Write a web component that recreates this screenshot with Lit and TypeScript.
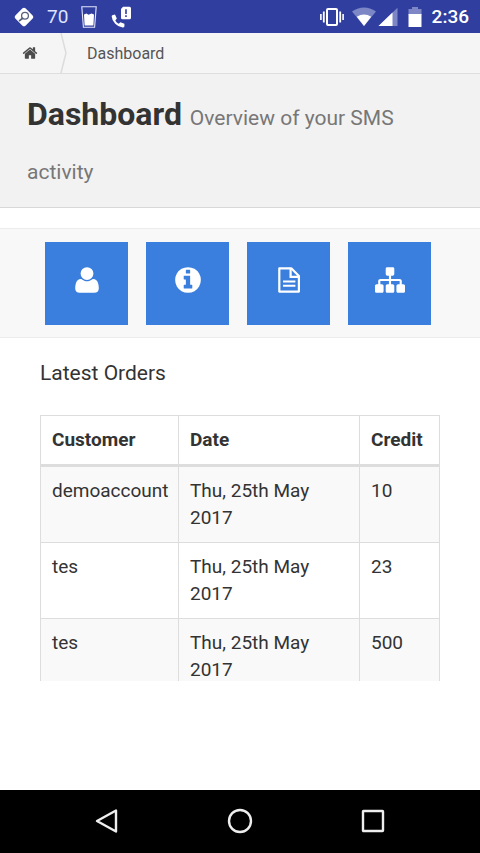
import { LitElement, html, css, svg } from "lit";
import { customElement } from "lit/decorators.js";

const HOME = "M1472 992v480q0 26-19 45t-45 19h-384v-384h-256v384h-384q-26 0-45-19t-19-45v-480q0-1 .5-3t.5-3l575-474 575 474q1 2 1 6zm223-69l-62 74q-8 9-21 11h-3q-13 0-21-7l-692-577-692 577q-12 8-24 7-13-2-21-11l-62-74q-8-10-7-23.5t11-21.5l719-599q32-26 76-26t76 26l244 204v-195q0-14 9-23t23-9h192q14 0 23 9t9 23v408l219 182q10 8 11 21.5t-7 23.5z";
const USER = "M1600 1405q0 120-73 189.5t-194 69.5h-874q-121 0-194-69.5t-73-189.5q0-53 3.5-103.5t14-109 26.5-108.5 43-97.5 62-81 85.5-53.5 111.5-20q9 0 42 21.5t74.5 48 108 48 133.5 21.5 133.5-21.5 108-48 74.5-48 42-21.5q61 0 111.5 20t85.5 53.5 62 81 43 97.5 26.5 108.5 14 109 3.5 103.5zm-320-893q0 159-112.5 271.5t-271.5 112.5-271.5-112.5-112.5-271.5 112.5-271.5 271.5-112.5 271.5 112.5 112.5 271.5z";
const INFO = "M1152 1376v-160q0-14-9-23t-23-9h-96v-512q0-14-9-23t-23-9h-320q-14 0-23 9t-9 23v160q0 14 9 23t23 9h96v320h-96q-14 0-23 9t-9 23v160q0 14 9 23t23 9h448q14 0 23-9t9-23zm-128-896v-160q0-14-9-23t-23-9h-192q-14 0-23 9t-9 23v160q0 14 9 23t23 9h192q14 0 23-9t9-23zm640 416q0 209-103 385.5t-279.5 279.5-385.5 103-385.5-103-279.5-279.5-103-385.5 103-385.5 279.5-279.5 385.5-103 385.5 103 279.5 279.5 103 385.5z";
const SITEMAP = "M1792 1248v320q0 40-28 68t-68 28h-320q-40 0-68-28t-28-68v-320q0-40 28-68t68-28h96v-192h-512v192h96q40 0 68 28t28 68v320q0 40-28 68t-68 28h-320q-40 0-68-28t-28-68v-320q0-40 28-68t68-28h96v-192h-512v192h96q40 0 68 28t28 68v320q0 40-28 68t-68 28h-320q-40 0-68-28t-28-68v-320q0-40 28-68t68-28h96v-192q0-52 38-90t90-38h512v-192h-96q-40 0-68-28t-28-68v-320q0-40 28-68t68-28h320q40 0 68 28t28 68v320q0 40-28 68t-68 28h-96v192h512q52 0 90 38t38 90v192h96q40 0 68 28t28 68z";

const glyph = (d: string) => svg`<path transform="scale(0.0167411)" fill="currentColor" d=${d} />`;

const documentIcon = svg`
  <path fill="none" stroke="currentColor" stroke-width="2.2" stroke-linejoin="round"
    d="M5.3 3.4h12.2l7.4 7.6v15.6H5.3z" />
  <path fill="none" stroke="currentColor" stroke-width="2.2" d="M16.6 3.4v8.4h8.3" />
  <path fill="none" stroke="currentColor" stroke-width="2" d="M9 16.5h12.4M9 20.8h12.4" />`;

const tiles = [
  { label: "Account", icon: glyph(USER) },
  { label: "Information", icon: glyph(INFO) },
  { label: "Documents", icon: documentIcon },
  { label: "Network", icon: glyph(SITEMAP) },
];

const orders = [
  { customer: "demoaccount", date: "Thu, 25th May 2017", credit: 10 },
  { customer: "tes", date: "Thu, 25th May 2017", credit: 23 },
  { customer: "tes", date: "Thu, 25th May 2017", credit: 500 },
];

@customElement("status-bar")
export class StatusBar extends LitElement {
  static styles = css`
    :host {
      display: flex;
      justify-content: space-between;
      align-items: center;
      height: 33px;
      padding: 0 11px 0 14px;
      background: #303f9f;
      color: #fff;
      font-size: 19px;
    }
    .group { display: flex; align-items: center; gap: 13px; }
    .system { gap: 8px; }
    .count { color: #dfe3ff; }
    .clock { font-weight: 500; }
    svg { display: block; }
  `;
  render() {
    return html`
      <div class="group">
        <svg width="20" height="20" viewBox="0 0 20 20" aria-hidden="true">
          <rect x="2.8" y="2.8" width="14.4" height="14.4" rx="2.5" transform="rotate(45 10 10)" fill="#fff" />
          <circle cx="11" cy="8.8" r="3.4" fill="none" stroke="#59617f" stroke-width="1.3" />
          <path d="M8.6 11.2L5.6 13.6" stroke="#59617f" stroke-width="1.8" stroke-linecap="round" />
        </svg>
        <span class="count">70</span>
        <svg width="16" height="22" viewBox="0 0 16 22" aria-hidden="true">
          <path d="M.8.8h14.4L13.6 21.2H2.4z" fill="none" stroke="#e3e6fb" stroke-width="1.1" />
          <path d="M3 8.500l2.500-1 2 1.200 3-1.200 2.500 1-.6 11H3.600z" fill="#fff" />
        </svg>
        <svg width="22" height="22" viewBox="0 0 22 22" aria-hidden="true">
          <path d="M2.300 9.200l2.700-.6 1.800 4-1.500 1.800q1.200 2.200 3.400 3.400l1.700-1.600 4 1.600v2.700q-.3 1-1.800.9-4.500-.5-7.400-3.600Q2 14.800 1.700 10.500q-.1-1 .6-1.300z" fill="#fff" />
          <path d="M13 .7h6.500q1.500 0 1.500 1.500v9.600q0 1.500-1.500 1.500h-7q-1.500 0-1.500-1.500V3z" fill="#fff" />
          <path d="M16 3.300v4.700M16 9.300v1.700" stroke="#303f9f" stroke-width="1.600" />
        </svg>
      </div>
      <div class="group system">
        <svg width="24" height="20" viewBox="0 0 24 20" fill="none" stroke="#fff" aria-hidden="true">
          <rect x="7" y="2" width="10" height="16" rx="1" stroke-width="2" />
          <path d="M3.800 4.500v11M20.200 4.500v11" stroke-width="1.800" />
          <path d="M.9 7v6M23.100 7v6" stroke-width="1.600" />
        </svg>
        <svg width="46" height="20" viewBox="0 0 46 20" aria-hidden="true">
          <path d="M0 4.500Q12-3.500 24 4.500L12 19z" fill="#7d87c6" />
          <path d="M4.800 9.800Q12 5 19.200 9.800L12 19z" fill="#fff" />
          <path d="M45.500 .8V19H26.500z" fill="#7d87c6" />
          <path d="M40.500 5.500V19H26.500z" fill="#fff" />
        </svg>
        <svg width="18" height="20" viewBox="0 0 18 20" aria-hidden="true">
          <path d="M2.500 2h3.500V0h6v2h3.500v6h-13z" fill="#7d87c6" />
          <path d="M2.500 7h13v13h-13z" fill="#fff" />
        </svg>
        <span class="clock">2:36</span>
      </div>
    `;
  }
}

@customElement("nav-bar")
export class NavBar extends LitElement {
  static styles = css`
    :host {
      box-sizing: border-box;
      display: flex;
      justify-content: center;
      align-items: center;
      gap: 92px;
      height: 63px;
      padding-bottom: 2px;
      background: #000;
      flex: none;
    }
    button {
      display: block;
      padding: 8px;
      border: 0;
      background: none;
      color: #eee;
    }
    svg { display: block; }
  `;
  render() {
    return html`
      <button aria-label="Back">
        <svg width="24" height="26" viewBox="0 0 24 26"><path d="M21 2.500v21L2 13z" fill="none" stroke="currentColor" stroke-width="2.400" stroke-linejoin="round" /></svg>
      </button>
      <button aria-label="Home">
        <svg width="26" height="26" viewBox="0 0 26 26"><circle cx="13" cy="13" r="11" fill="none" stroke="currentColor" stroke-width="2.400" /></svg>
      </button>
      <button aria-label="Recent apps">
        <svg width="24" height="26" viewBox="0 0 24 26"><rect x="2" y="3" width="20" height="20" rx=".5" fill="none" stroke="currentColor" stroke-width="2.400" /></svg>
      </button>
    `;
  }
}

@customElement("app-root")
export class AppRoot extends LitElement {
  static styles = css`
    :host {
      display: flex;
      flex-direction: column;
      height: 100vh;
      background: #fff;
      color: #333;
      font-family: Roboto, "Liberation Sans", sans-serif;
      font-size: 19px;
      line-height: 27px;
    }
    * { box-sizing: border-box; }
    svg { display: block; }
    status-bar, .crumbs, .title, .tiles { flex: none; }
    .crumbs {
      display: flex;
      align-items: stretch;
      height: 41px;
      background: #f5f5f5;
      border-bottom: 1px solid #dedede;
      font-size: 16px;
    }
    .home {
      display: flex;
      align-items: center;
      padding: 0 22px;
      color: #4c4c4c;
    }
    .current {
      display: flex;
      align-items: center;
      padding-left: 20px;
      color: #555;
    }
    .title {
      padding: 13px 27px 12px;
      background: #f2f2f2;
      border-bottom: 1px solid #d8d8d8;
    }
    h1 {
      margin: 0;
      font-size: 32px;
      line-height: 54px;
      font-weight: 700;
    }
    h1 small {
      font-size: 21px;
      line-height: 27px;
      font-weight: 400;
      color: #777;
    }
    .tiles {
      display: flex;
      gap: 18px;
      margin-top: 20px;
      padding: 13px 45px 12px;
      background: #f8f8f8;
      border: solid #ececec;
      border-width: 1px 0;
    }
    .tile {
      display: flex;
      flex: 0 0 83px;
      align-items: center;
      justify-content: center;
      height: 83px;
      padding: 0 0 8px;
      border: 0;
      background: #3a7fdd;
      color: #fff;
    }
    main {
      display: flex;
      flex-direction: column;
      flex: 1;
      min-height: 0;
      padding: 22px 40px 109px;
    }
    h2 {
      margin: 0 0 28px;
      font-size: 21px;
      line-height: 27px;
      font-weight: 400;
    }
    .scroll {
      flex: 1;
      min-height: 0;
      overflow: auto;
      scrollbar-width: none;
    }
    table {
      width: 100%;
      border-collapse: collapse;
      table-layout: fixed;
    }
    .customer { width: 138px; }
    .credit { width: 80px; }
    th, td {
      padding: 10px 11px 11px;
      border: 1px solid #ddd;
      text-align: left;
      vertical-align: top;
    }
    td { padding-right: 9px; }
    .date-cell { padding-right: 40px; }
    th { border-bottom: 3px solid #ddd; font-weight: 700; }
    tbody tr:nth-child(odd) { background: #f9f9f9; }
  `;
  render() {
    return html`
      <status-bar></status-bar>
      <nav class="crumbs" aria-label="Breadcrumb">
        <a class="home" href="#" aria-label="Home">
          <svg width="16" height="16" viewBox="0 0 1792 1792"><path fill="currentColor" d=${HOME} /></svg>
        </a>
        <svg width="7" height="40" viewBox="0 0 7 40" aria-hidden="true">
          <path d="M1 0L6 20L1 40" fill="none" stroke="#dcdcdc" stroke-width="1.500" />
        </svg>
        <span class="current">Dashboard</span>
      </nav>
      <header class="title">
        <h1>Dashboard <small>Overview of your SMS activity</small></h1>
      </header>
      <div class="tiles">
        ${tiles.map((t) => html`
          <button class="tile" aria-label=${t.label}>
            <svg width="30" height="30" viewBox="0 0 30 30">${t.icon}</svg>
          </button>`)}
      </div>
      <main>
        <h2 id="orders">Latest Orders</h2>
        <div class="scroll">
          <table aria-labelledby="orders">
            <thead>
              <tr>
                <th class="customer" scope="col">Customer</th>
                <th scope="col">Date</th>
                <th class="credit" scope="col">Credit</th>
              </tr>
            </thead>
            <tbody>
              ${orders.map((o) => html`
                <tr>
                  <td>${o.customer}</td>
                  <td class="date-cell">${o.date}</td>
                  <td>${o.credit}</td>
                </tr>`)}
            </tbody>
          </table>
        </div>
      </main>
      <nav-bar></nav-bar>
    `;
  }
}
